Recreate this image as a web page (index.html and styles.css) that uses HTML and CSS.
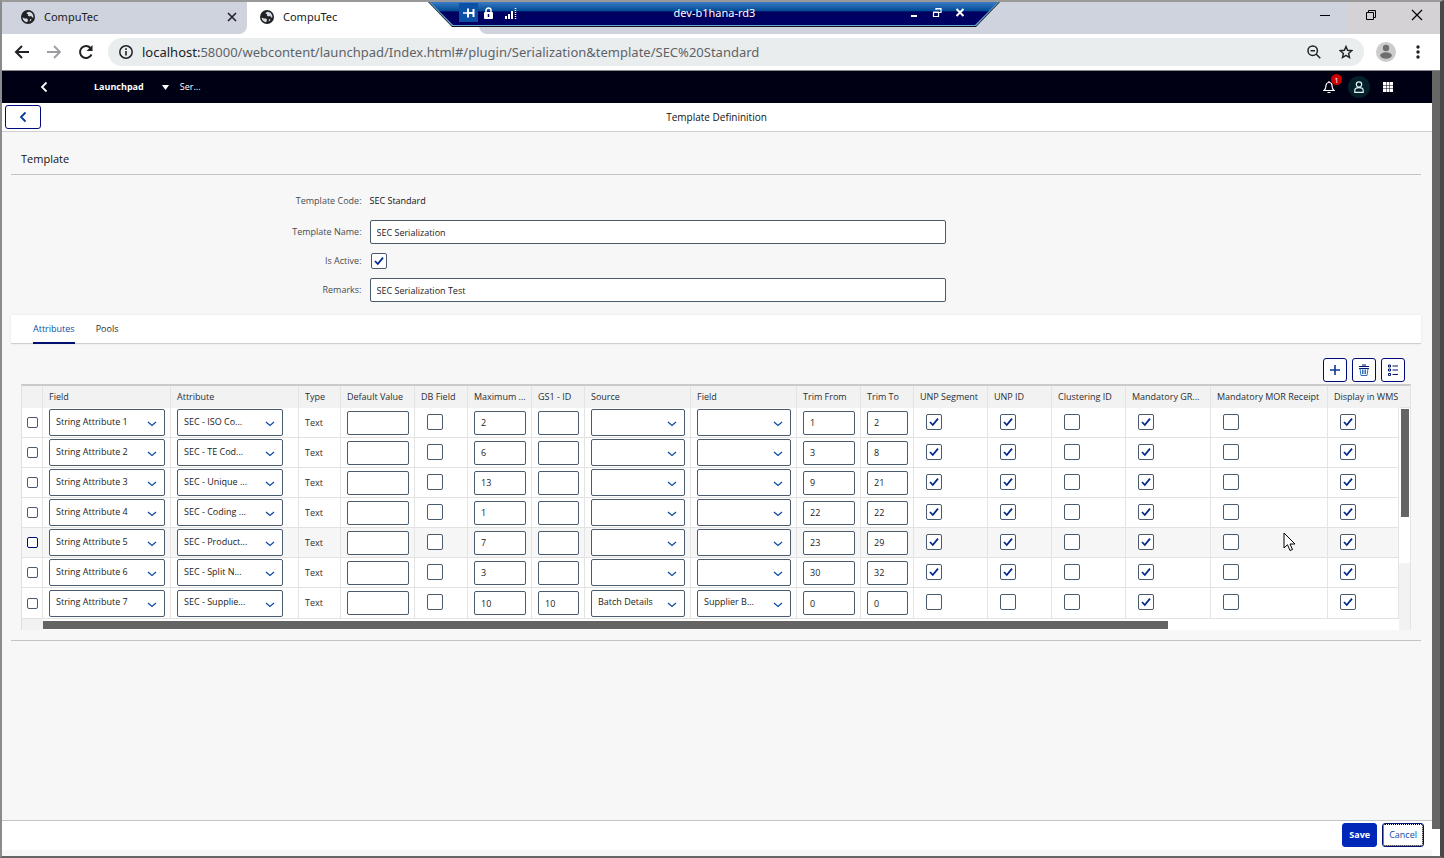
FILE: index.html
```html
<!DOCTYPE html>
<html lang="en">
<head>
<meta charset="utf-8">
<title>CompuTec</title>
<link rel="stylesheet" href="styles.css">
</head>
<body>
<svg class="defs" aria-hidden="true">
  <symbol id="globe" viewBox="0 0 14 14"><circle cx="7" cy="7" r="7" fill="#202124"/><path d="M1.6 7.4 4 8.4 6.2 8.6 7 10 6.2 12.2C3.600 12 1.700 10 1.600 7.400ZM7.500 1.700C6.500 2.500 5.400 2.600 5.500 3.600L7.200 4.200 6.800 5.600 8.600 6.400 10.200 5.800 11 7.600 12.400 7.600C12.700 4.500 10.500 1.800 7.500 1.700ZM9 9.200 10.600 9.200 9.800 10.800 8.600 11.400Z" fill="#d8dce4"/></symbol>
  <symbol id="chevron-left" viewBox="0 0 8 12"><path d="M6.500 1.500 2 6l4.500 4.500" fill="none" stroke="currentColor" stroke-width="1.800"/></symbol>
  <symbol id="chevron-down" viewBox="0 0 10 6"><path d="M1 1 5 4.500 9 1" fill="none" stroke="currentColor" stroke-width="1.200"/></symbol>
</svg>
<div class="window">
  <header class="tabstrip">
    <div class="tab"><svg width="14" height="14"><use href="#globe"/></svg><span class="tab-name">CompuTec</span>
      <button class="plain" aria-label="Close tab"><svg width="10" height="10" viewBox="0 0 10 10"><path d="M1 1l8 8M9 1 1 9" stroke="#202124" stroke-width="1.600"/></svg></button></div>
    <div class="tab active"><svg width="14" height="14"><use href="#globe"/></svg><span class="tab-name">CompuTec</span></div>
    <div class="strip-rest"></div>
    <div class="window-buttons">
      <button class="plain" aria-label="Minimize"><svg width="12" height="12" viewBox="0 0 12 12"><path d="M1 6.500h10" stroke="#000"/></svg></button>
      <button class="plain shade" aria-label="Restore"><svg width="12" height="12" viewBox="0 0 12 12"><path d="M1.500 3.500h7v7h-7zM3.500 3.500v-2h7v7h-2" fill="none" stroke="#000"/></svg></button>
      <button class="plain shade" aria-label="Close"><svg width="12" height="12" viewBox="0 0 12 12"><path d="M1 1l10 10M11 1 1 11" stroke="#000" stroke-width="1.200"/></svg></button>
    </div>
  </header>

  <div class="remote-bar">
    <svg class="remote-shape" viewBox="0 0 572 25" preserveAspectRatio="none">
      <defs><linearGradient id="glass" x1="0" y1="0" x2="0" y2="1"><stop offset="0" stop-color="#3b7bc4"/><stop offset=".4" stop-color="#004a94"/><stop offset=".42" stop-color="#000060"/><stop offset="1" stop-color="#000064"/></linearGradient></defs>
      <path d="M0 0h572l-24 25H24z" fill="#111"/><path d="M1 0h570l-23 24H24z" fill="#69a6d8"/><path d="M2 0h568l-23 23H25z" fill="url(#glass)"/>
    </svg>
    <button class="plain pin" aria-label="Pin"><svg width="12" height="12" viewBox="0 0 12 12"><path d="M0 6h4" stroke="#fff" stroke-width="1.500"/><path d="M5 1.500v9M10.500 2v8M5 6h5" stroke="#fff" stroke-width="2" fill="none"/></svg></button>
    <svg width="11" height="12" viewBox="0 0 11 12"><path d="M3 6V3.500a2.500 2.500 0 0 1 5 0V6" fill="none" stroke="#fff" stroke-width="1.500"/><rect x="1" y="5" width="9" height="7" rx="1" fill="#fff"/><path d="M5.500 7v3" stroke="#000060" stroke-width="1.500"/></svg>
    <svg width="12" height="12" viewBox="0 0 12 12"><path d="M1 12v-3M4 12V7M7 12V4" stroke="#fff" stroke-width="2"/><path d="M10.500 12V0" stroke="#fff" stroke-width="1.500" stroke-dasharray="1 1"/></svg>
    <span class="remote-name">dev-b1hana-rd3</span>
    <button class="plain" aria-label="Minimize session"><svg width="10" height="12" viewBox="0 0 10 12"><path d="M2 9h6" stroke="#fff" stroke-width="2"/></svg></button>
    <button class="plain" aria-label="Restore session"><svg width="10" height="12" viewBox="0 0 10 12"><path d="M1.500 5.500h5v4h-5zM1 5h6M4 3V1.500h5v4H7M3.500 2h6" fill="none" stroke="#fff" stroke-width="1.200"/></svg></button>
    <button class="plain" aria-label="Close session"><svg width="10" height="12" viewBox="0 0 10 12"><path d="M1.500 2l7 7M8.500 2l-7 7" stroke="#fff" stroke-width="2"/></svg></button>
  </div>

  <nav class="browserbar">
    <button class="plain" aria-label="Back"><svg width="16" height="14" viewBox="0 0 16 14"><path d="M15 7H2M8 1 2 7l6 6" fill="none" stroke="#202124" stroke-width="2"/></svg></button>
    <button class="plain" aria-label="Forward"><svg width="16" height="14" viewBox="0 0 16 14"><path d="M1 7h13M8 1l6 6-6 6" fill="none" stroke="#9b9da0" stroke-width="1.800"/></svg></button>
    <button class="plain" aria-label="Reload"><svg width="16" height="16" viewBox="0 0 16 16"><path d="M13.500 10.500A6 6 0 1 1 12.500 4" fill="none" stroke="#202124" stroke-width="2"/><path d="M14.500 1v6H8.500z" fill="#202124"/></svg></button>
    <div class="address">
      <svg width="14" height="14" viewBox="0 0 14 14"><circle cx="7" cy="7" r="6.200" fill="none" stroke="#202124" stroke-width="1.500"/><path d="M7 6v4.500M7 3.200v1.700" stroke="#202124" stroke-width="1.600"/></svg>
      <span class="url"><b>localhost:</b>58000/webcontent/launchpad/Index.html#/plugin/Serialization&amp;template/SEC%20Standard</span>
      <button class="plain" aria-label="Zoom"><svg width="14" height="14" viewBox="0 0 14 14"><circle cx="5.700" cy="5.700" r="4.700" fill="none" stroke="#202124" stroke-width="1.500"/><path d="M9 9l4.300 4.300M3.500 5.700H8" stroke="#202124" stroke-width="1.500"/></svg></button>
      <button class="plain" aria-label="Bookmark"><svg width="14" height="14" viewBox="0 0 14 14"><path d="M7 1.500 8.600 5.300l4.100.4-3.100 2.700.9 4.100L7 10.300l-3.500 2.200.9-4.100L1.300 5.700l4.100-.4z" fill="none" stroke="#202124" stroke-width="1.400"/></svg></button>
    </div>
    <button class="plain profile" aria-label="Profile"><svg width="20" height="20" viewBox="0 0 20 20"><circle cx="10" cy="10" r="10" fill="#ccc"/><circle cx="10" cy="6" r="3.200" fill="#6e6e6e"/><ellipse cx="10" cy="13.500" rx="5.800" ry="3.300" fill="#6e6e6e"/></svg></button>
    <button class="plain" aria-label="Menu"><svg width="4" height="14" viewBox="0 0 4 14"><g fill="#202124"><circle cx="2" cy="2" r="1.700"/><circle cx="2" cy="7" r="1.700"/><circle cx="2" cy="12" r="1.700"/></g></svg></button>
  </nav>

  <div class="viewport">
    <div class="app">
      <header class="shell">
        <button class="plain shell-back" aria-label="Back"><svg width="8" height="12"><use href="#chevron-left"/></svg></button>
        <a class="home" href="#launchpad">Launchpad</a>
        <button class="plain crumb"><svg width="7" height="5" viewBox="0 0 7 5"><path d="M0 0h7L3.500 5z" fill="#fff"/></svg>Ser...</button>
        <span class="spacer"></span>
        <button class="plain bell" aria-label="Notifications"><svg width="12" height="14" viewBox="0 0 12 14"><path d="M1 10.500c1.500-1 2-2 2-5a3 3 0 0 1 6 0c0 3 .5 4 2 5zM6 2.500V1M4.500 12.500h3" fill="none" stroke="#fff" stroke-width="1.200"/></svg><span class="badge">1</span></button>
        <button class="plain user" aria-label="User"><svg width="10" height="12" viewBox="0 0 10 12"><circle cx="5" cy="3.500" r="2.700" fill="none" stroke="#e0f4f7" stroke-width="1.200"/><path d="M.8 11.300V9.500c0-2 1.500-2.800 4.200-2.800s4.200.8 4.200 2.800v1.800z" fill="none" stroke="#e0f4f7" stroke-width="1.200"/></svg></button>
        <button class="plain" aria-label="Products"><svg width="10" height="10" viewBox="0 0 10 10"><path d="M1.500 0v10M5 0v10M8.500 0v10" stroke="#fff" stroke-width="3" stroke-dasharray="2.900 .6"/></svg></button>
      </header>
      <div class="page-title">
        <button class="outline back" aria-label="Navigate back"><svg width="8" height="12"><use href="#chevron-left"/></svg></button>
        <h1>Template Defininition</h1>
      </div>
      <main>
        <h2>Template</h2>
        <form class="details">
          <span class="label">Template Code:</span><span class="value">SEC Standard</span>
          <label for="name">Template Name:</label><div><input id="name" class="text" type="text" value="SEC Serialization"></div>
          <label for="active">Is Active:</label><div class="check-line"><input id="active" class="check" type="checkbox" checked></div>
          <label for="remarks">Remarks:</label><div><input id="remarks" class="text" type="text" value="SEC Serialization Test"></div>
        </form>
        <div class="tabs" role="tablist">
          <button class="plain selected" role="tab" aria-selected="true">Attributes</button>
          <button class="plain" role="tab" aria-selected="false">Pools</button>
        </div>
        <section class="panel">
          <div class="tools">
            <button class="outline" aria-label="Add"><svg width="10" height="10" viewBox="0 0 10 10"><path d="M5 0v10M0 5h10" stroke="#0a3a9a" stroke-width="1.600"/></svg></button>
            <button class="outline" aria-label="Delete"><svg width="12" height="12" viewBox="0 0 12 12"><path d="M1 2.500h10M4 1h4M1 4.500h10" fill="none" stroke="#00146e" stroke-width="1.200"/><path d="M2 4.500 3 11.500h6l1-7M4.500 5.500v4.500M6 5.500v4.500M7.500 5.500v4.500" fill="none" stroke="#2f6db5" stroke-width="1"/></svg></button>
            <button class="outline" aria-label="Settings"><svg width="12" height="12" viewBox="0 0 12 12"><path d="M5.500 2H11M5.500 6H11M5.500 10.500H11" stroke="#00146e" stroke-width="1.200"/><path d="M1.500 1h2v2h-2zM1.500 5h2v2h-2zM1.500 9.500h2v2h-2z" fill="none" stroke="#00146e" stroke-width="1"/></svg></button>
          </div>
          <div class="grid-frame">
            <div class="grid-scroll">
              <table>
                <colgroup id="columns"></colgroup>
                <thead><tr id="heads"></tr></thead>
                <tbody id="rows"></tbody>
              </table>
              <div class="hbar"><div class="hcorner"></div><div class="htrack"><div class="hthumb"></div></div></div>
            </div>
            <div class="vbar"><div class="vhead"></div><div class="vtrack"><div class="vthumb"></div></div></div>
          </div>
        </section>
      </main>
      <footer>
        <div class="actions"><button class="save">Save</button><button class="cancel">Cancel</button></div>
      </footer>
    </div>
    <div class="page-scroll"><div class="page-thumb"></div></div>
  </div>
</div>
<svg class="pointer" width="13" height="20" viewBox="0 0 13 20"><path d="M1 1v15l3.500-3.300L7 18.500l2.500-1L7 12h5z" fill="#fff" stroke="#000"/></svg>
<script src="grid.js"></script>
</body>
</html>
```
FILE: styles.css
```css
* { box-sizing: border-box; }
body {
  margin: 0;
  height: 100vh;
  overflow: hidden;
  font: 9px/14px "Open Sans", "Liberation Sans", sans-serif;
  color: #2a2e32;
}
button, input, select { font: inherit; color: inherit; margin: 0; }
svg { flex: none; display: block; }
h1, h2 { margin: 0; font-weight: 400; color: #111; }
.defs { position: absolute; width: 0; height: 0; }
.plain { border: 0; padding: 0; background: none; display: flex; align-items: center; justify-content: center; }
.window {
  position: relative;
  height: 100%;
  display: flex;
  flex-direction: column;
  border: 2px solid #999;
  border-left-color: #8b8b8b;
  border-bottom-color: #666;
  border-right: 4px solid #484848;
}

/* Browser chrome */
.tabstrip { flex: none; display: flex; height: 32px; background: #fff; font: 11px/16px "Noto Sans", sans-serif; color: #202124; }
.tab { flex: none; width: 245px; display: flex; align-items: center; gap: 9px; padding: 0 10px 2px 19px; background: #ced3dd; border-bottom-right-radius: 8px; }
.tab.active { width: 232px; padding-left: 13px; background: #fff; }
.tab-name { flex: 1; }
.strip-rest { flex: 1; background: #ced3dd; border-bottom-left-radius: 8px; }
.window-buttons { display: flex; background: #ced3dd; }
.window-buttons button { width: 46px; padding-bottom: 6px; }
.window-buttons .shade { background: #d4d2d5; }

.remote-bar { position: absolute; top: 0; left: 426px; width: 572px; height: 25px; display: flex; align-items: center; gap: 11px; padding: 0 35px 4px 31px; color: #fff; font: 11px/16px "Noto Sans", sans-serif; }
.remote-bar > * { position: relative; }
.remote-bar .remote-shape { position: absolute; inset: 0; width: 100%; height: 100%; }
.remote-bar .pin { width: 19px; height: 19px; margin-right: -6px; background: #0a50a5; }
.remote-bar button:not(.pin) { margin-left: 2px; }
.remote-name { flex: 1; text-align: center; padding-left: 5px; }

.browserbar { flex: none; display: flex; align-items: center; height: 37px; gap: 16px; padding: 0 20px 0 12px; background: #fff; border-bottom: 1px solid #8a8a8a; }
.address { flex: 1; min-width: 0; display: flex; align-items: center; gap: 18px; height: 28px; padding: 0 11px; border-radius: 14px; background: #e9edee; }
.browserbar .address { margin: 0 -4px 0 -2px; }
.profile { margin-right: 4px; }
.url { flex: 1; margin-left: -9px; font: 13px/20px "Noto Sans", sans-serif; color: #5f6368; white-space: nowrap; overflow: hidden; }
.url b { font-weight: 400; color: #202124; }

/* Application */
.viewport { flex: 1; min-height: 0; display: flex; }
.app { flex: 1; min-width: 0; display: flex; flex-direction: column; background: #f7f7f7; }
.page-scroll { width: 8px; background: #fff; padding-bottom: 27px; }
.page-thumb { height: 100%; background: #666; }
.shell { flex: none; display: flex; align-items: center; height: 32px; padding: 0 39px 0 38px; background: #000014; color: #fff; }
.home { margin: 0 18px 0 46px; color: #fff; font-weight: 700; text-decoration: none; }
.crumb { gap: 11px; }
.spacer { flex: 1; }
.bell { position: relative; }
.badge { position: absolute; top: -6px; left: 8px; width: 11px; height: 11px; border-radius: 50%; background: #c00; color: #fff; font-size: 8px; line-height: 11px; text-align: center; }
.user { width: 22px; height: 22px; margin: 0 13px; border-radius: 50%; background: #04202a; }
.page-title { flex: none; display: flex; align-items: center; height: 29px; padding-left: 3px; background: #fff; border-bottom: 1px solid #d0d0d0; }
.page-title h1 { flex: 1; padding-right: 40px; text-align: center; font-size: 10px; }
.outline { display: flex; align-items: center; justify-content: center; width: 24px; height: 24px; padding: 0; border: 1px solid #000a78; border-radius: 3px; background: #fff; color: #0a3a9a; }
.outline.back { width: 36px; }

main { flex: 1; padding: 0 11px 0 9px; }
h2 { padding: 19px 10px 7px; font-size: 11px; line-height: 16px; border-bottom: 1px solid #c4c4c4; }
.details { display: grid; grid-template-columns: 3fr 5fr 4fr; padding: 16px 0 13px; row-gap: 5px; align-items: center; }
.details > * { padding: 0 5px 0 6px; }
.details > :nth-child(odd) { grid-column: 1; padding-right: 2px; text-align: right; color: #484c50; }
.details .value { line-height: 20px; color: #111; }
.details > :nth-child(3), .details > :nth-child(4) { margin-top: 4px; }
.details .check-line { display: flex; padding: 4px 7px; }
.text { display: block; width: 100%; height: 24px; padding: 0 6px; border: 1px solid #4a5b6e; border-radius: 2px; background: #fff; color: #222; }
.check {
  appearance: none;
  display: block;
  width: 16px;
  height: 16px;
  border: 1px solid #4a5b6e;
  border-radius: 2px;
  background: #fff;
}
.check:checked {
  background: #fff url("data:image/svg+xml,%3Csvg xmlns='http://www.w3.org/2000/svg' viewBox='0 0 14 14'%3E%3Cpath d='M3 7l2.800 3L11 3.600' fill='none' stroke='%23002a86' stroke-width='1.800'/%3E%3C/svg%3E") center / 14px 14px no-repeat;
}
.tabs { display: flex; gap: 21px; height: 29px; padding: 0 22px; background: #fff; border-bottom: 1px solid #d0d0d0; box-shadow: 0 0 2px #e4e4e4; }
.tabs button { height: 29px; border-bottom: 2px solid transparent; }
.tabs .selected { color: #0a50a5; border-color: #00106e; }

.panel { padding: 14px 10px 10px; border-bottom: 1px solid #c4c4c4; }
.tools { display: flex; justify-content: flex-end; gap: 5px; padding: 0 6px 2px; }
.grid-frame { display: flex; border-top: 2px solid #cacaca; border-left: 1px solid #e0e0e0; border-right: 1px solid #e4e4e4; }
.grid-scroll { flex: 1; min-width: 0; overflow: hidden; }
table { width: 100%; min-width: 1377px; table-layout: fixed; border-collapse: separate; border-spacing: 0; background: #fff; }
th, td { padding: 0 5px 0 6px; border-right: 1px solid #e4e4e4; text-align: left; white-space: nowrap; }
th { height: 22px; background: #f2f2f2; font-weight: 400; }
th:last-child { padding-right: 0; border-right-color: #f2f2f2; }
td { height: 30px; border-bottom: 1px solid #e2e2e2; }
tr:last-child td { height: 31px; }
td:first-child { padding-left: 5px; }
td.flag { padding: 0 0 2px 12px; }
.hover td { background: #f6f6f6; }
.mark { appearance: none; display: block; width: 11px; height: 11px; border: 1px solid #4a5b6e; border-radius: 2px; background: #fff; }
.hover .mark { border-color: #000a78; }
.choice { position: relative; }
.choice.short { margin-right: 10px; }
.choice select { appearance: none; display: block; width: 100%; height: 27px; padding: 0 24px 2px 6px; border: 1px solid #4a5b6e; border-radius: 2px; background: #fff; color: #222; }
.choice svg { position: absolute; right: 8px; top: 12px; color: #0a4aa0; pointer-events: none; }

.hbar { display: flex; height: 11px; }
.hcorner { width: 21px; background: #f2f2f2; }
.htrack { flex: 1; padding: 2px 0 1px; background: #fff; }
.hthumb { width: 83%; height: 8px; background: #646464; }
.vbar { width: 11px; display: flex; flex-direction: column; background: #f2f2f2; }
.vhead { height: 22px; border-bottom: 1px solid #e4e4e4; }
.vtrack { height: 155px; padding: 1px 1px 0 2px; background: #fff; }
.vthumb { height: 108px; background: #646464; }

footer { flex: none; border-top: 1px solid #c4c4c4; padding-bottom: 6px; }
.actions { display: flex; justify-content: flex-end; gap: 5px; height: 29px; padding: 2px 8px 3px; background: #fff; }
.save, .cancel { height: 24px; padding: 0 6px; border: 1px solid #0028b8; border-radius: 3px; }
.save { background: #0028b8; color: #fff; font-weight: 700; }
.cancel { background: #fff; color: #0a4aa0; border-color: #00106e; outline: 1px dotted #000; outline-offset: -2px; }
.pointer { position: absolute; left: 1283px; top: 532px; }
```
FILE: grid.js
```js
const columns = [
  ["", 21], ["Field", 128], ["Attribute", 128], ["Type", 42], ["Default Value", 74],
  ["DB Field", 53], ["Maximum ...", 64], ["GS1 - ID", 53], ["Source", 106], ["Field", 106],
  ["Trim From", 64], ["Trim To", 53], ["UNP Segment", 74], ["UNP ID", 64],
  ["Clustering ID", 74], ["Mandatory GR...", 85], ["Mandatory MOR Receipt", 117], ["Display in WMS", 0]
];
const rows = [
  ["SEC - ISO Co...", 2, "", "", "", 1, 2, true],
  ["SEC - TE Cod...", 6, "", "", "", 3, 8, true],
  ["SEC - Unique ...", 13, "", "", "", 9, 21, true],
  ["SEC - Coding ...", 1, "", "", "", 22, 22, true],
  ["SEC - Product...", 7, "", "", "", 23, 29, true],
  ["SEC - Split N...", 3, "", "", "", 30, 32, true],
  ["SEC - Supplie...", 10, 10, "Batch Details", "Supplier B...", 0, 0, false]
];
const hovered = 4;

const choice = (label, value, extra = "") =>
  `<td><div class="choice ${extra}"><select aria-label="${label}"><option>${value}</option></select><svg width="10" height="6"><use href="#chevron-down"/></svg></div></td>`;
const text = (label, value) =>
  `<td><input class="text" type="text" aria-label="${label}" value="${value}"></td>`;
const flag = (label, on) =>
  `<td class="flag"><input class="check" type="checkbox" aria-label="${label}"${on ? " checked" : ""}></td>`;

document.getElementById("columns").innerHTML =
  columns.map(([, width]) => width ? `<col style="width:${width}px">` : "<col>").join("");
document.getElementById("heads").innerHTML =
  columns.map(([name]) => `<th scope="col">${name}</th>`).join("");
document.getElementById("rows").innerHTML = rows.map((row, i) => {
  const [attribute, max, gs1, source, field, from, to, unp] = row;
  return `<tr${i === hovered ? ' class="hover"' : ""}>` +
    `<td><input class="mark" type="checkbox" aria-label="Select row ${i + 1}"></td>` +
    choice("Field", `String Attribute ${i + 1}`) +
    choice("Attribute", attribute, "short") +
    "<td>Text</td>" +
    text("Default Value", "") + flag("DB Field", false) +
    text("Maximum", max) + text("GS1 - ID", gs1) +
    choice("Source", source) + choice("Source field", field) +
    text("Trim From", from) + text("Trim To", to) +
    flag("UNP Segment", unp) + flag("UNP ID", unp) + flag("Clustering ID", false) +
    flag("Mandatory GR", true) + flag("Mandatory MOR Receipt", false) + flag("Display in WMS", true) +
    "</tr>";
}).join("");
```
